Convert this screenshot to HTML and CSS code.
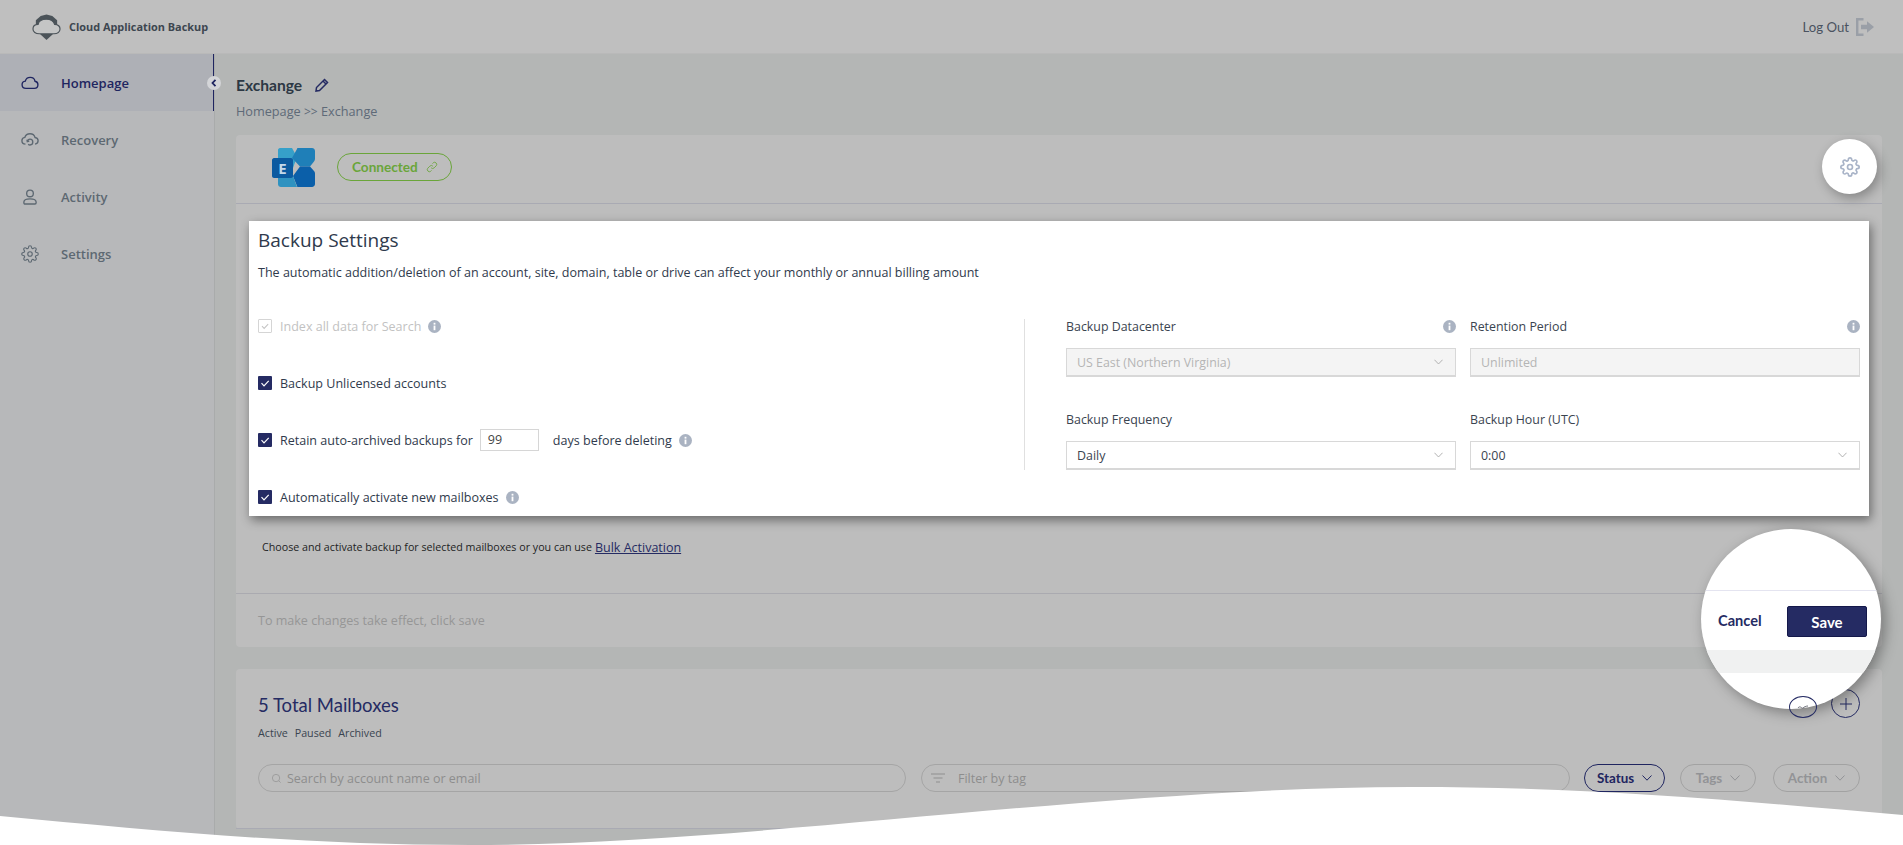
FILE: index.html
```html
<!DOCTYPE html>
<html lang="en">
<head>
<meta charset="utf-8">
<title>Cloud Application Backup</title>
<link rel="stylesheet" href="styles.css">
</head>
<body>
<svg class="defs" width="0" height="0" aria-hidden="true">
  <symbol id="gear" viewBox="0 0 24 24">
    <circle cx="12" cy="12" r="3"/>
    <path d="M19.4 15a1.65 1.65 0 0 0 .33 1.82l.06.06a2 2 0 0 1 0 2.83 2 2 0 0 1-2.83 0l-.06-.06a1.65 1.65 0 0 0-1.82-.33 1.65 1.65 0 0 0-1 1.51V21a2 2 0 0 1-2 2 2 2 0 0 1-2-2v-.09A1.65 1.65 0 0 0 9 19.4a1.65 1.65 0 0 0-1.82.33l-.06.06a2 2 0 0 1-2.83 0 2 2 0 0 1 0-2.83l.06-.06a1.65 1.65 0 0 0 .33-1.82 1.65 1.65 0 0 0-1.51-1H3a2 2 0 0 1-2-2 2 2 0 0 1 2-2h.09A1.65 1.65 0 0 0 4.6 9a1.65 1.65 0 0 0-.33-1.82l-.06-.06a2 2 0 0 1 0-2.83 2 2 0 0 1 2.83 0l.06.06a1.65 1.65 0 0 0 1.82.33H9a1.65 1.65 0 0 0 1-1.51V3a2 2 0 0 1 2-2 2 2 0 0 1 2 2v.09a1.65 1.65 0 0 0 1 1.51 1.65 1.65 0 0 0 1.82-.33l.06-.06a2 2 0 0 1 2.83 0 2 2 0 0 1 0 2.83l-.06.06a1.65 1.65 0 0 0-.33 1.82V9a1.65 1.65 0 0 0 1.51 1H21a2 2 0 0 1 2 2 2 2 0 0 1-2 2h-.09a1.65 1.65 0 0 0-1.51 1z"/>
  </symbol>
  <symbol id="info" viewBox="0 0 13 13">
    <circle cx="6.5" cy="6.5" r="6.5" fill="#aab3c2"/>
    <rect x="5.6" y="5.6" width="1.8" height="4.6" fill="#fff"/>
    <rect x="5.6" y="2.8" width="1.8" height="1.8" fill="#fff"/>
  </symbol>
  <symbol id="chev" viewBox="0 0 10 6">
    <path d="M.5.5 5 5.2 9.500.5" fill="none" stroke="currentColor"/>
  </symbol>
</svg>

<header class="topbar">
  <div class="brand">
    <svg class="brand-logo" viewBox="0 0 30 28">
      <path d="M4 7 9 2.500 15 1l6 1.500L26 7v9H4z" fill="#4b5359"/>
      <path d="M8 21h14l-7 6.500z" fill="#4b5359"/>
      <path d="M7.500 21C3.800 21 1 19 1 16s2.300-4.600 5.300-4.700C7 8 10.500 6 14.800 6c4.400 0 7.700 2.200 8.600 5.300 3.100.2 5.600 1.900 5.600 4.800s-2.700 4.900-6.300 4.900z" fill="#c4c5c5" stroke="#4b5359" stroke-width="1.200"/>
    </svg>
    <span class="brand-name">Cloud Application Backup</span>
  </div>
  <div class="logout">
    <span>Log Out</span>
    <svg class="logout-icon" viewBox="0 0 18 18">
      <path d="M7.500 1.200H1.200v15.600h6.300" fill="none" stroke="#9a9fa7" stroke-width="2.400"/>
      <path d="M5 6.800h6V3.200L18 9l-7 5.800v-3.600H5z" fill="#9a9fa7"/>
    </svg>
  </div>
</header>

<div class="shell">
  <aside class="sidebar">
    <nav class="nav">
      <a class="nav-item active">
        <svg class="nav-icon" viewBox="0 0 20 20"><path d="M5.500 16C3 16 1.200 14.300 1.200 12c0-2.200 1.500-3.800 3.600-4C5.400 5.500 7.500 3.800 10.200 3.800c2.700 0 4.900 1.800 5.400 4.300 1.900.3 3.200 1.900 3.200 3.900 0 2.300-1.800 4-4 4z"/></svg>
        <span>Homepage</span>
      </a>
      <a class="nav-item">
        <svg class="nav-icon" viewBox="0 0 20 20"><path d="M5 14.500c-2.300-.2-4-1.700-4-3.800 0-2 1.400-3.400 3.300-3.700C5 4.700 7.300 3 10 3c2.800 0 5 1.800 5.600 4.200 2 .3 3.400 1.700 3.400 3.700 0 2-1.500 3.400-3.400 3.600"/><path d="M7 11.500c.3-1.400 1.500-2.400 3-2.400 1.700 0 3.100 1.400 3.100 3.200s-1.400 3.200-3.100 3.200c-.8 0-1.500-.3-2-.8M6.600 9.600 7 11.800l2.200-.5"/></svg>
        <span>Recovery</span>
      </a>
      <a class="nav-item">
        <svg class="nav-icon" viewBox="0 0 20 20"><circle cx="10" cy="6" r="3.700"/><path d="M4.500 17.800c-.8 0-1.300-.5-1.300-1.300v-1c0-2 2-3.500 6.800-3.500s6.800 1.500 6.800 3.500v1c0 .8-.5 1.300-1.300 1.300z"/></svg>
        <span>Activity</span>
      </a>
      <a class="nav-item">
        <svg class="nav-icon"><use href="#gear"/></svg>
        <span>Settings</span>
      </a>
    </nav>
    <span class="collapse">
      <svg viewBox="0 0 6 8"><path d="M4.500.8 1.500 4l3 3.200" fill="none" stroke="#1f2560" stroke-width="1.800"/></svg>
    </span>
  </aside>

  <main class="main">
    <div class="title-row">
      <h1 class="page-title">Exchange</h1>
      <svg class="pencil" viewBox="0 0 14 14"><path d="M9.500 1.500 12.500 4.500 4.500 12.500 1 13l.5-3.500z" fill="none" stroke="#252b63" stroke-width="1.500"/><path d="M8 3l3 3" stroke="#252b63" stroke-width="1.500"/></svg>
    </div>
    <div class="crumbs">Homepage <span class="crumb-sep">&gt;&gt;</span> Exchange</div>

    <section class="card">
      <div class="card-head">
        <svg class="exchange" viewBox="0 0 43 39">
          <path d="M6 2c0-1 .8-2 2-2h12l5 9-4 11H6z" fill="#36a0c9"/>
          <path d="M25 1c0-.6.500-1 1-1h14c1.500 0 3 1.300 3 3v8c0 1-.4 1.700-1 2.400L38 18.500H28L20 10z" fill="#1f7fb8"/>
          <path d="M28 18.500h10l4 4.500c.6.700 1 1.500 1 2.400V36c0 1.600-1.400 3-3 3H26c-.6 0-1-.5-1-1l-4-10z" fill="#0b5fa9"/>
          <path d="M6 28h15l4 11H9c-1.700 0-3-1.300-3-3z" fill="#2f92c0"/>
          <path d="M2 10h17c1 0 2 1 2 2v16c0 1-1 2-2 2H2c-1 0-2-1-2-2V12c0-1 1-2 2-2z" fill="#0b5aa0"/>
          <text class="exchange-e" x="10.500" y="25.500" text-anchor="middle">E</text>
        </svg>
        <div class="status-pill">
          <span>Connected</span>
          <svg class="link-icon" viewBox="0 0 14 14"><path d="M6 8a2.500 2.500 0 0 0 3.500 0l2.500-2.500A2.500 2.500 0 0 0 8.500 2L7.500 3M8 6a2.500 2.500 0 0 0-3.500 0L2 8.500A2.500 2.500 0 0 0 5.500 12l1-1" fill="none" stroke="#6aa53a"/></svg>
        </div>
      </div>

      <div class="panel">
        <h2 class="panel-title">Backup Settings</h2>
        <p class="panel-desc">The automatic addition/deletion of an account, site, domain, table or drive can affect your monthly or annual billing amount</p>
        <div class="panel-body">
          <div class="options">
            <div class="option disabled">
              <span class="check off"><svg viewBox="0 0 14 14"><path d="M3.500 7.200 6 9.800l4.700-5" fill="none" stroke="#c5c5c5" stroke-width="1.200"/></svg></span>
              <span>Index all data for Search</span>
              <svg class="info"><use href="#info"/></svg>
            </div>
            <div class="option">
              <span class="check"><svg viewBox="0 0 14 14"><path d="M3.500 7.200 6 9.800l4.700-5" fill="none" stroke="#fff" stroke-width="1.200"/></svg></span>
              <span>Backup Unlicensed accounts</span>
            </div>
            <div class="option">
              <span class="check"><svg viewBox="0 0 14 14"><path d="M3.500 7.200 6 9.800l4.700-5" fill="none" stroke="#fff" stroke-width="1.200"/></svg></span>
              <span>Retain auto-archived backups for</span>
              <span class="days">99</span>
              <span class="days-after">days before deleting</span>
              <svg class="info"><use href="#info"/></svg>
            </div>
            <div class="option">
              <span class="check"><svg viewBox="0 0 14 14"><path d="M3.500 7.200 6 9.800l4.700-5" fill="none" stroke="#fff" stroke-width="1.200"/></svg></span>
              <span>Automatically activate new mailboxes</span>
              <svg class="info"><use href="#info"/></svg>
            </div>
          </div>
          <div class="fields">
            <div class="field">
              <div class="field-label"><span>Backup Datacenter</span><svg class="info"><use href="#info"/></svg></div>
              <div class="select locked"><span>US East (Northern Virginia)</span><svg class="select-chev"><use href="#chev"/></svg></div>
            </div>
            <div class="field">
              <div class="field-label"><span>Retention Period</span><svg class="info"><use href="#info"/></svg></div>
              <div class="select locked"><span>Unlimited</span></div>
            </div>
            <div class="field">
              <div class="field-label"><span>Backup Frequency</span></div>
              <div class="select"><span>Daily</span><svg class="select-chev"><use href="#chev"/></svg></div>
            </div>
            <div class="field">
              <div class="field-label"><span>Backup Hour (UTC)</span></div>
              <div class="select"><span>0:00</span><svg class="select-chev"><use href="#chev"/></svg></div>
            </div>
          </div>
        </div>
      </div>

      <div class="bulk">
        <span>Choose and activate backup for selected mailboxes or you can use</span>
        <a class="bulk-link">Bulk Activation</a>
      </div>
      <div class="card-foot">To make changes take effect, click save</div>
    </section>

    <section class="card mailboxes">
      <div class="mail-head">
        <div>
          <h2 class="mail-title">5 Total Mailboxes</h2>
          <div class="mail-tabs"><span>Active</span><span>Paused</span><span>Archived</span></div>
        </div>
        <div class="mail-actions">
          <span class="round squashed"><svg viewBox="0 0 14 8"><path d="M2 5c2-3 4 1 5 0s3-2 5-2" fill="none" stroke="#6f717b"/></svg></span>
          <span class="round"><svg viewBox="0 0 14 14"><path d="M7 1v12M1 7h12" stroke="#252b63" fill="none"/></svg></span>
        </div>
      </div>
      <div class="filters">
        <div class="pill-input search-input">
          <svg class="pill-icon" viewBox="0 0 12 12"><circle cx="5.500" cy="5.500" r="4" fill="none" stroke="#9a9a9a"/><path d="m8.500 8.500 2 2" stroke="#9a9a9a"/></svg>
          <span>Search by account name or email</span>
        </div>
        <div class="pill-input filter-input">
          <svg class="pill-icon wide" viewBox="0 0 16 12"><path d="M1 2h14M3.500 6h9M6 10h4" stroke="#8f8f8f" fill="none"/></svg>
          <span>Filter by tag</span>
        </div>
        <div class="pill-btn strong status-btn"><span>Status</span><svg class="pill-chev"><use href="#chev"/></svg></div>
        <div class="pill-btn tags-btn"><span>Tags</span><svg class="pill-chev"><use href="#chev"/></svg></div>
        <div class="pill-btn action-btn"><span>Action</span><svg class="pill-chev"><use href="#chev"/></svg></div>
      </div>
      <div class="mail-divider"></div>
    </section>
  </main>
</div>

<div class="spot gear-spot"><svg class="spot-gear"><use href="#gear"/></svg></div>
<div class="spot save-spot">
  <div class="spot-line"></div>
  <div class="spot-band"></div>
  <span class="spot-cancel">Cancel</span>
  <span class="spot-save">Save</span>
</div>

<svg class="wave" viewBox="0 780 1903 65" preserveAspectRatio="none">
  <path d="M0 816C150 830 300 845 470 845 750 845 1100 787 1411 787 1600 787 1750 802 1903 815V845H0z" fill="#fff"/>
</svg>
</body>
</html>
```
FILE: styles.css
```css
* { box-sizing: border-box; }
html, body { margin: 0; height: 845px; overflow: hidden; }
body {
  position: relative;
  background: #b4b6b5;
  color: #2f3a4c;
  font-family: "Open Sans", "Liberation Sans", sans-serif;
  font-size: 12.5px;
}
h1, h2, p { margin: 0; font-weight: 400; }
.defs { position: absolute; }

/* top bar */
.topbar {
  height: 54px;
  background: #bfbfbf;
  display: flex;
  align-items: center;
  justify-content: space-between;
  padding: 0 29px 0 32px;
  border-bottom: 1px solid #b9b9b9;
}
.brand { display: flex; align-items: center; gap: 8px; }
.brand-logo { width: 29px; height: 28px; }
.brand-name { font-weight: 700; font-size: 10.9px; color: #3d4650; }
.logout { display: flex; align-items: center; gap: 7px; font-family: Lato, sans-serif; font-size: 13.2px; color: #4a5260; }
.logout-icon { width: 18px; height: 18px; }

.shell { display: flex; height: 791px; }

/* sidebar */
.sidebar {
  position: relative;
  width: 215px;
  flex: none;
  background: #b7b8ba;
  border-right: 1px solid #a9abab;
}
.nav-item {
  height: 57px;
  display: flex;
  align-items: center;
  gap: 22px;
  padding-left: 21px;
  font-weight: 600;
  font-size: 13px;
  color: #5d6872;
}
.nav-item.active { background: #aeb0b6; color: #1f2560; box-shadow: inset -1px 0 0 #1f2560; }
.nav-icon { width: 18px; height: 18px; fill: none; stroke: #5d6872; stroke-width: 1.500; flex: none; }
.active .nav-icon { stroke: #1f2560; }
.collapse {
  position: absolute;
  left: 207px;
  top: 22px;
  width: 14px;
  height: 14px;
  border-radius: 50%;
  background: #d4d5d8;
  display: flex;
  align-items: center;
  justify-content: center;
}
.collapse svg { width: 6px; height: 8px; }

/* main */
.main { flex: 1; padding: 21px 21px 0 21px; min-width: 0; }
.title-row { display: flex; align-items: center; gap: 13px; height: 20px; }
.page-title { font-family: Lato, sans-serif; font-weight: 700; font-size: 15.600px; color: #2c3844; }
.pencil { width: 14px; height: 14px; }
.crumbs { margin-top: 6px; height: 20px; line-height: 20px; font-size: 12.700px; color: #5e6a78; }
.crumb-sep { font-size: 12px; }

.card { background: #bdbdbd; border-radius: 4px; margin-top: 14px; }
.card-head {
  height: 69px;
  display: flex;
  align-items: center;
  gap: 22px;
  padding: 0 0 4px 36px;
  border-bottom: 1px solid #a9aab3;
}
.exchange { width: 43px; height: 39px; }
.exchange-e { font-family: "Open Sans", sans-serif; font-weight: 700; font-size: 15px; fill: #c3d8ea; }
.status-pill {
  width: 115px;
  height: 28px;
  border: 1px solid #6aa53a;
  border-radius: 14px;
  display: flex;
  align-items: center;
  gap: 8px;
  padding-left: 14px;
  font-family: Lato, sans-serif;
  font-weight: 700;
  font-size: 13.600px;
  color: #6aa53a;
}
.link-icon { width: 12px; height: 12px; }

/* white settings panel */
.panel {
  position: relative;
  margin: 17px 13px 0;
  padding: 6px 9px 7px;
  height: 295px;
  background: #fff;
  box-shadow: 2px 4px 10px rgba(0, 0, 0, .45);
}
.panel-title { font-size: 19px; line-height: 26px; color: #2f3a4c; }
.panel-desc { margin-top: 10px; line-height: 20px; font-size: 12.540px; color: #2f3a4c; }
.panel-body { display: flex; margin-top: 32px; align-items: flex-start; }
.options { width: 766px; flex: none; display: flex; flex-direction: column; gap: 35px; }
.option { height: 22px; display: flex; align-items: center; font-size: 12.540px; }
.option.disabled { color: #c2c2c2; }
.check {
  width: 14px;
  height: 14px;
  margin-right: 8px;
  background: #252b63;
  border-radius: 1px;
  flex: none;
  display: flex;
}
.check.off { background: #fff; border: 1px solid #d5d5d5; }
.check svg { width: 100%; height: 100%; }
.info { width: 13px; height: 13px; margin-left: 7px; flex: none; }
.days {
  width: 59px;
  height: 22px;
  margin-left: 7px;
  padding-left: 7px;
  border: 1px solid #d6d6d6;
  line-height: 20px;
  color: #444;
}
.days-after { margin-left: 14px; }
.fields {
  flex: 1;
  margin-top: 4px;
  height: 151px;
  padding-left: 41px;
  border-left: 1px solid #e0e0e0;
  display: grid;
  grid-template-columns: 390px 390px;
  column-gap: 14px;
  row-gap: 35px;
}
.field-label {
  height: 14px;
  margin-bottom: 15px;
  display: flex;
  align-items: center;
  justify-content: space-between;
  font-size: 12.400px;
  color: #3a4450;
}
.select {
  height: 29px;
  border: 1px solid #d8d8d8;
  border-bottom-width: 2px;
  padding: 0 12px 0 10px;
  display: flex;
  align-items: center;
  justify-content: space-between;
  font-size: 12.400px;
  color: #3a4450;
}
.select.locked { background: #f4f4f4; color: #b5b5b5; }
.select-chev { width: 9px; height: 6px; color: #a9a9a9; }

.bulk {
  margin-top: 21px;
  padding-left: 26px;
  height: 20px;
  display: flex;
  align-items: center;
  gap: 3px;
  font-size: 10.700px;
  color: #1d1f24;
}
.bulk-link { font-size: 12.500px; color: #252b63; text-decoration: underline; }
.card-foot {
  margin-top: 36px;
  height: 54px;
  display: flex;
  align-items: center;
  padding-left: 22px;
  border-top: 1px solid #aaaab0;
  font-size: 12.540px;
  color: #969696;
}

/* mailboxes */
.mailboxes { margin-top: 22px; padding-top: 21px; }
.mail-head { display: flex; justify-content: space-between; padding: 0 22px; height: 74px; }
.mail-title { font-family: Lato, sans-serif; font-size: 18.500px; line-height: 30px; color: #252b63; }
.mail-tabs { display: flex; gap: 7px; margin-top: 5px; line-height: 16px; font-size: 10.700px; color: #3a4450; }
.mail-actions { display: flex; gap: 14px; align-items: flex-end; height: 28px; }
.round {
  width: 29px;
  height: 29px;
  border: 1px solid #252b63;
  border-radius: 50%;
  display: flex;
  align-items: center;
  justify-content: center;
}
.round svg { width: 14px; height: 14px; }
.round.squashed { position: relative; z-index: 3; width: 28px; height: 22px; }
.filters { display: flex; gap: 14px; padding: 0 22px; }
.pill-input {
  flex: 1;
  height: 28px;
  border: 1px solid #a5a5a5;
  border-radius: 14px;
  display: flex;
  align-items: center;
  gap: 5px;
  padding-left: 12px;
  font-size: 12.500px;
  color: #8d8d8d;
}
.search-input { flex: none; width: 648px; }
.filter-input { margin-left: 1px; padding-left: 8px; }
.pill-icon { width: 11px; height: 11px; }
.pill-icon.wide { width: 16px; height: 12px; margin-right: 7px; }
.pill-btn {
  height: 28px;
  border: 1px solid #a2a2a2;
  border-radius: 14px;
  display: flex;
  align-items: center;
  justify-content: center;
  gap: 8px;
  font-family: Lato, sans-serif;
  font-weight: 700;
  font-size: 13.400px;
  color: #929396;
  flex: none;
}
.pill-btn.strong { border-color: #1f2560; color: #1f2560; }
.status-btn { width: 81px; }
.tags-btn { width: 76px; margin-left: 1px; }
.action-btn { width: 87px; margin-left: 3px; }
.pill-chev { width: 10px; height: 6px; }
.mail-divider { margin-top: 36px; border-top: 1px solid #a9aab3; }

/* tutorial spotlights */
.spot { position: absolute; border-radius: 50%; background: #fff; overflow: hidden; z-index: 2; }
.gear-spot {
  left: 1822px;
  top: 139px;
  width: 55px;
  height: 55px;
  display: flex;
  align-items: center;
  justify-content: center;
  box-shadow: 3px 4px 12px rgba(0, 0, 0, .3);
}
.spot-gear { width: 20px; height: 20px; fill: none; stroke: #a9b4c8; stroke-width: 2; }
.save-spot {
  left: 1701px;
  top: 529px;
  width: 180px;
  height: 180px;
  box-shadow: 4px 4px 14px rgba(0, 0, 0, .35);
}
.spot-line { position: absolute; left: 0; right: 0; top: 61px; border-top: 1px solid #e4e4f0; }
.spot-band { position: absolute; left: 0; right: 0; top: 121px; height: 23px; background: #f0f1f1; }
.spot-cancel {
  position: absolute;
  left: 17px;
  top: 83px;
  font-family: Lato, sans-serif;
  font-weight: 700;
  font-size: 14.600px;
  color: #252b63;
}
.spot-save {
  position: absolute;
  left: 86px;
  top: 77px;
  width: 80px;
  height: 31px;
  background: #252b63;
  border: 1px solid #14184a;
  border-radius: 2px;
  display: flex;
  align-items: center;
  justify-content: center;
  font-family: Lato, sans-serif;
  font-weight: 700;
  font-size: 15px;
  color: #fff;
}

.wave { position: absolute; left: 0; bottom: 0; width: 1903px; height: 65px; z-index: 4; display: block; }
```
